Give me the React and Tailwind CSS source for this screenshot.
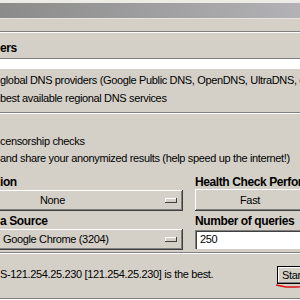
import React from 'react';

const raised = 'shadow-[inset_-1px_-1px_#404040,inset_1px_1px_#ffffff,inset_-2px_-2px_#808080]';

export default function App() {
  return (
    <div className="w-[300px] h-[300px] overflow-hidden bg-[#d4d0c8] text-black font-['Liberation_Sans',Arial,sans-serif] text-[11px] tracking-[-0.35px] leading-none">
      <div className="w-[320px]">
        <div className="h-[3px] bg-[#ecebe6]" />
        <div className="h-[15px] bg-gradient-to-r from-[#8b8b8b] to-[#b5b5b9]" />
        <div className="h-[13px] border-t border-[#e6e3dc]" />
        <div className="h-px bg-[#808080]" />
        <div className="h-px bg-white" />

        <div className="h-[25px] flex items-end pb-[3px]">
          <Label>ers</Label>
        </div>
        <div className="h-px bg-[#808080]" />
        <div className="h-[10px] bg-white" />

        <div className="pt-[2px] leading-[18px] whitespace-nowrap">
          <div>global DNS providers (Google Public DNS, OpenDNS, UltraDNS, etc.)</div>
          <div>best available regional DNS services</div>
        </div>
        <Separator className="mt-[5px]" />

        <div className="mt-[19px] leading-[17px] whitespace-nowrap">
          <div>censorship checks</div>
          <div>and share your anonymized results (help speed up the internet!)</div>
        </div>

        <div className="mt-[8px] -ml-[10px] grid grid-cols-[193px_1fr] gap-x-[12px]">
          <Label className="pl-[10px]">ion</Label>
          <Label>Health Check Performance</Label>

          <Combo className="mt-px">
            <span className="pl-[50px]">None</span>
          </Combo>
          <button className={`mt-[0px] h-[22px] w-[110px] text-center bg-[#d4d0c8] ${raised}`}>Fast</button>

          <Label className="pl-[10px] mt-[3px]">a Source</Label>
          <Label className="mt-[3px]">Number of queries</Label>

          <Combo className="mt-px">
            <span className="pl-[13px]">Google Chrome (3204)</span>
          </Combo>
          <div className="mt-[2px] h-[19px] flex items-center pl-[5px] bg-white shadow-[inset_1px_1px_#808080,inset_2px_2px_#404040,inset_-1px_-1px_#ffffff]">
            250
          </div>
        </div>

        <Separator className="mt-[2px]" />

        <div className="h-[44px] flex items-start">
          <div className="flex-1 pt-[15px] whitespace-nowrap">
            S-121.254.25.230 [121.254.25.230] is the best.
          </div>
          <div className="w-[43px] pt-[12px] flex flex-col">
            <button className="h-[18px] text-left pl-[4px] bg-[#d4d0c8] border border-black shadow-[inset_-1px_-1px_#808080,inset_1px_1px_#ffffff]">
              Start
            </button>
            <svg width="43" height="5" viewBox="0 0 43 5" className="-ml-px">
              <path d="M0 1 L5 2 L10 3 L20 3 L43 2.5" fill="none" stroke="#e01010" strokeWidth="1.4" />
            </svg>
          </div>
        </div>
        <Separator />
      </div>
    </div>
  );
}

function Label({ children, className = '' }) {
  return (
    <div className={`h-[14px] leading-[14px] font-bold text-[12px] tracking-[-0.4px] whitespace-nowrap ${className}`}>
      {children}
    </div>
  );
}

function Combo({ children, className = '' }) {
  return (
    <div className={`h-[21px] flex items-center justify-between bg-[#d4d0c8] whitespace-nowrap ${raised} ${className}`}>
      {children}
      <div className="mr-[6px] w-[12px] h-[5px] bg-[#d4d0c8] shadow-[inset_-1px_-1px_#404040,inset_1px_1px_#ffffff]" />
    </div>
  );
}

function Separator({ className = '' }) {
  return (
    <div className={className}>
      <div className="h-px bg-[#808080]" />
      <div className="h-px bg-white" />
    </div>
  );
}
